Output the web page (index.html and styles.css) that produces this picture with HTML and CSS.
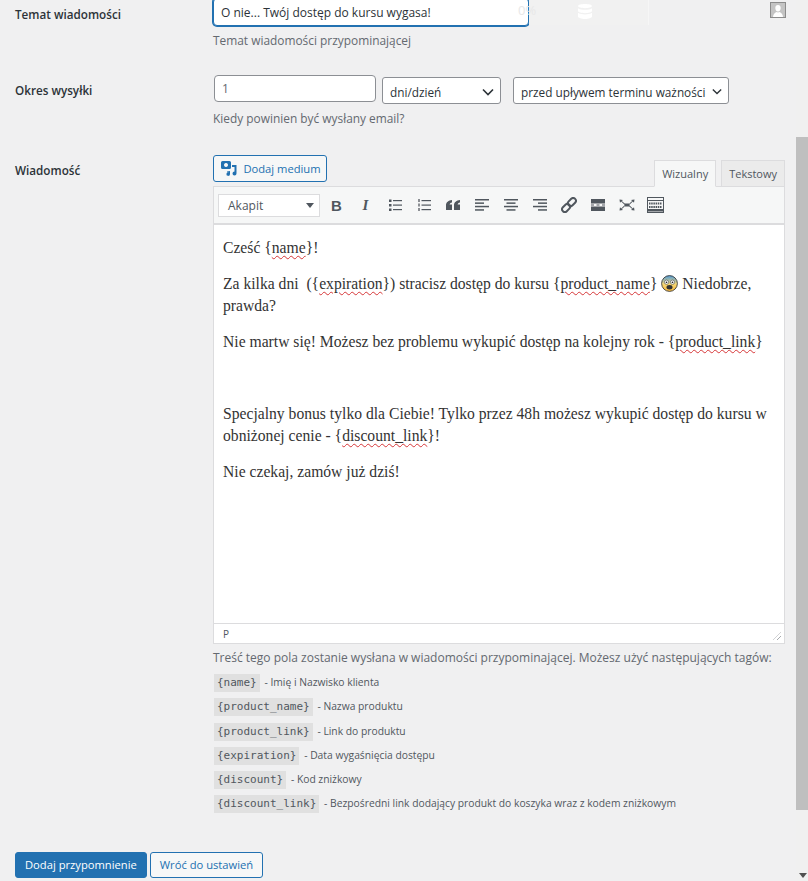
FILE: index.html
```html
<!DOCTYPE html>
<html lang="pl">

<head>
    <meta charset="UTF-8">
    <meta name="viewport" content="width=device-width, initial-scale=1.0">
    <title>Dodaj przypomnienie</title>
    <link rel="stylesheet" href="styles.css">
</head>

<body>
<div class="ghost-bar">
    <span class="ghost-pct">0%</span>
    <svg class="ghost-db" width="14" height="15" viewBox="0 0 12 18" preserveAspectRatio="none"><path d="M0 2.500C0 1 3 0 6 0s6 1 6 2.500S9 5 6 5 0 4 0 2.500zM0 5c1 1.500 4 2 6 2s5-.5 6-2v3.500C12 10 9 11 6 11S0 10 0 8.500zM0 10.500c1 1.500 4 2 6 2s5-.5 6-2V15c0 1.500-3 3-6 3s-6-1.500-6-3z" fill="#fff"/></svg>
    <svg class="ghost-user" width="16" height="16" viewBox="0 0 16 16"><rect x=".5" y=".5" width="15" height="15" fill="#c4c4c4" stroke="#8c8c8c"/><path d="M8 3c1.700 0 2.700 1.300 2.700 3S9.700 9.500 8 9.500 5.300 7.700 5.300 6 6.300 3 8 3zM3 15c0-3 2.500-4.500 3.500-5 .9.600 2.100.600 3 0 1 .5 3.500 2 3.500 5z" fill="#fff"/></svg>
</div>

<div class="scrollbar">
    <div class="scroll-thumb"></div>
    <div class="scroll-arrow"></div>
</div>

<form class="form">
    <div class="row row-subject">
        <label class="label">Temat wiadomości</label>
        <div class="field">
            <input class="ipt ipt-subject" type="text" value="O nie... Twój dostęp do kursu wygasa!">
            <p class="desc">Temat wiadomości przypominającej</p>
        </div>
    </div>

    <div class="row row-period">
        <label class="label">Okres wysyłki</label>
        <div class="field">
            <div class="period">
                <input class="ipt ipt-num" type="text" value="1">
                <div class="sel sel-unit">dni/dzień<svg class="chev" width="12" height="8" viewBox="0 0 12 8"><path d="M1 1.500l5 5 5-5" fill="none" stroke="#2c3338" stroke-width="1.600"/></svg></div>
                <div class="sel sel-when">przed upływem terminu ważności<svg class="chev" width="10" height="7" viewBox="0 0 12 8"><path d="M1 1.500l5 5 5-5" fill="none" stroke="#2c3338" stroke-width="1.600"/></svg></div>
            </div>
            <p class="desc">Kiedy powinien być wysłany email?</p>
        </div>
    </div>

    <div class="row row-message">
        <label class="label">Wiadomość</label>
        <div class="field">
            <div class="ed-top">
                <button class="btn btn-media" type="button">
                    <svg class="media-icon" width="16" height="15" viewBox="0 0 16 15"><path d="M1.500 0h7A1.500 1.500 0 0 1 10 1.500v5A1.500 1.500 0 0 1 8.500 8h-7A1.500 1.500 0 0 1 0 6.500v-5A1.500 1.500 0 0 1 1.500 0z M5 2a2 2 0 1 0 .01 0z" fill="#2271b1" fill-rule="evenodd"/><path d="M11 4h4.500v8.500a2 2 0 1 1-2-2V6H11z M6 10.500l3-.5v3a1.800 1.800 0 1 1-1.500-1.700V11l-1.500.2z" fill="#2271b1"/></svg>
                    Dodaj medium
                </button>
                <div class="tabs">
                    <span class="tab tab-on">Wizualny</span>
                    <span class="tab">Tekstowy</span>
                </div>
            </div>

            <div class="editor">
                <div class="toolbar">
                    <div class="format">Akapit<span class="format-arrow"></span></div>
                    <div class="tools">
                        <span class="tool tool-b">B</span>
                        <span class="tool tool-i">I</span>
                        <span class="tool"><svg width="14" height="14" viewBox="0 0 14 14" fill="#50575e"><rect x="1" y="1.500" width="2.500" height="2.500"/><rect x="1" y="6" width="2.500" height="2.500"/><rect x="1" y="10.500" width="2.500" height="2.500"/><rect x="5" y="2" width="9" height="1.200"/><rect x="5" y="6.500" width="9" height="1.200"/><rect x="5" y="11" width="9" height="1.200"/></svg></span>
                        <span class="tool"><svg width="14" height="14" viewBox="0 0 14 14" fill="#50575e"><rect x="1" y="1" width="2" height="3" fill="#8c8f94"/><rect x="1" y="5.500" width="2" height="3" fill="#8c8f94"/><rect x="1" y="10" width="2" height="3" fill="#8c8f94"/><rect x="4.500" y="2" width="9.500" height="1.200"/><rect x="4.500" y="6.500" width="9.500" height="1.200"/><rect x="4.500" y="11" width="9.500" height="1.200"/></svg></span>
                        <span class="tool"><svg width="14" height="12" viewBox="0 0 14 12" fill="#50575e"><path d="M6 1v2.500C4.500 3.800 3.700 4.700 3.600 5.500H6V11H0V6C0 3.500 2.500 1.200 6 1zM14 1v2.500c-1.500.3-2.300 1.200-2.400 2H14V11H8V6c0-2.500 2.500-4.800 6-5z"/></svg></span>
                        <span class="tool"><svg width="14" height="12" viewBox="0 0 14 12" fill="#50575e"><rect width="14" height="1.500"/><rect y="3.400" width="9" height="1.500"/><rect y="6.800" width="14" height="1.500"/><rect y="10.200" width="9" height="1.500"/></svg></span>
                        <span class="tool"><svg width="14" height="12" viewBox="0 0 14 12" fill="#50575e"><rect width="14" height="1.500"/><rect x="2.500" y="3.400" width="9" height="1.500"/><rect y="6.800" width="14" height="1.500"/><rect x="2.500" y="10.200" width="9" height="1.500"/></svg></span>
                        <span class="tool"><svg width="14" height="12" viewBox="0 0 14 12" fill="#50575e"><rect width="14" height="1.500"/><rect x="5" y="3.400" width="9" height="1.500"/><rect y="6.800" width="14" height="1.500"/><rect x="5" y="10.200" width="9" height="1.500"/></svg></span>
                        <span class="tool"><svg width="16" height="16" viewBox="0 0 16 16" fill="none" stroke="#50575e" stroke-width="2"><rect x="8.200" y="0.600" width="5.500" height="9" rx="2.700" transform="rotate(45 11 5)"/><rect x="2.300" y="6.400" width="5.500" height="9" rx="2.700" transform="rotate(45 5 11)"/></svg></span>
                        <span class="tool"><svg width="14" height="12" viewBox="0 0 14 12" fill="#50575e"><rect width="14" height="4.500"/><rect y="7.500" width="14" height="4.500"/><rect y="5.500" width="3" height="1"/><rect x="5.500" y="5.500" width="3" height="1"/><rect x="11" y="5.500" width="3" height="1"/></svg></span>
                        <span class="tool"><svg width="16" height="14" viewBox="0 0 16 14" fill="#50575e"><path d="M5.500 5.500h5v3h-5zM0.500 1.500L4 2 2.800 3 6 5.800 5.300 6.500 2.200 3.600 1 4.800zM15.500 1.500L12 2l1.200 1L10 5.800l.7.700 3.100-2.900L15 4.800zM.5 12.500L4 12l-1.200-1L6 8.200 5.300 7.500 2.200 10.400 1 9.200zM15.500 12.500L12 12l1.200-1L10 8.200l.7-.7 3.100 2.900L15 9.200z"/></svg></span>
                        <span class="tool"><svg width="17" height="16" viewBox="0 0 17 16"><rect x=".5" y=".5" width="16" height="15" fill="#f6f7f7" stroke="#50575e"/><rect x="1" y="3" width="15" height="1" fill="#50575e"/><path d="M2 6.500h13M2 10h13" stroke="#50575e" stroke-width="2" stroke-dasharray="1.500 .7"/><rect x="1" y="12" width="15" height="2.500" fill="#50575e"/></svg></span>
                    </div>
                </div>
                <div class="content">
                    <p>Cześć {<span class="spell">name</span>}!</p>
                    <p>Za kilka dni &nbsp;({<span class="spell">expiration</span>}) stracisz dostęp do kursu {<span class="spell">product_name</span>} <svg class="emoji" width="17" height="17" viewBox="0 0 20 20"><defs><linearGradient id="fear" x1="0" y1="0" x2="0" y2="1"><stop offset="0" stop-color="#4f9bd9"/><stop offset=".55" stop-color="#f7d774"/><stop offset="1" stop-color="#f4b63c"/></linearGradient></defs><circle cx="10" cy="10" r="9.300" fill="url(#fear)" stroke="#333" stroke-width="1"/><circle cx="6.500" cy="8.500" r="2.500" fill="#fff" stroke="#333" stroke-width=".6"/><circle cx="13.500" cy="8.500" r="2.500" fill="#fff" stroke="#333" stroke-width=".6"/><circle cx="6.500" cy="8.500" r="1" fill="#222"/><circle cx="13.500" cy="8.500" r="1" fill="#222"/><ellipse cx="10" cy="14.500" rx="3.500" ry="2.600" fill="#333"/></svg> Niedobrze, prawda?</p>
                    <p>Nie martw się! Możesz bez problemu wykupić dostęp na kolejny rok - {<span class="spell">product_link</span>}</p>
                    <p>&nbsp;</p>
                    <p>Specjalny bonus tylko dla Ciebie! Tylko przez 48h możesz wykupić dostęp do kursu w obniżonej cenie - {<span class="spell">discount_link</span>}!</p>
                    <p>Nie czekaj, zamów już dziś!</p>
                </div>
                <div class="status">P<span class="resize"></span></div>
            </div>

            <p class="desc desc-tags">Treść tego pola zostanie wysłana w wiadomości przypominającej. Możesz użyć następujących tagów:</p>
            <ul class="tags">
                <li><code>{name}</code> - Imię i Nazwisko klienta</li>
                <li><code>{product_name}</code> - Nazwa produktu</li>
                <li><code>{product_link}</code> - Link do produktu</li>
                <li><code>{expiration}</code> - Data wygaśnięcia dostępu</li>
                <li><code>{discount}</code> - Kod zniżkowy</li>
                <li><code>{discount_link}</code> - Bezpośredni link dodający produkt do koszyka wraz z kodem zniżkowym</li>
            </ul>
        </div>
    </div>

    <div class="actions">
        <button class="btn btn-primary" type="button">Dodaj przypomnienie</button>
        <button class="btn" type="button">Wróć do ustawień</button>
    </div>
</form>
</body>

</html>
```

FILE: styles.css
```css
html,
body {
    margin: 0;
    height: 881px;
    overflow: hidden;
    background: #f0f0f1;
}

body {
    position: relative;
    font-family: "Open Sans", "Noto Sans", sans-serif;
    font-size: 12px;
    color: #3c434a;
}

.form {
    margin-top: -2px;
    padding-left: 15px;
    width: 770px;
}

.row {
    display: grid;
    grid-template-columns: 198px 1fr;
}

.label {
    font-weight: 600;
    font-size: 11.700px;
    color: #2c3338;
    line-height: 16px;
}

.row-subject .label {
    padding-top: 8px;
}

.row-period {
    margin-top: 26px;
}

.row-period .label {
    padding-top: 7px;
}

.row-message {
    margin-top: 28px;
}

.row-message .label {
    padding-top: 7px;
}

.desc {
    margin: 5px 0 0;
    font-size: 11.900px;
    line-height: 18px;
    color: #646970;
}

.ipt {
    box-sizing: border-box;
    display: block;
    border: 1px solid #8c8f94;
    border-radius: 4px;
    background: #fff;
    font: 12px "Open Sans", sans-serif;
    color: #2c3338;
    padding: 0 7px;
}

.ipt-subject {
    width: 316px;
    height: 28px;
    border-color: #2271b1;
    box-shadow: 0 0 0 1px #2271b1;
    outline: none;
}

.period {
    display: flex;
    align-items: flex-start;
    gap: 6px;
}

.ipt-num {
    margin-left: 1px;
    width: 162px;
    height: 27px;
    color: #646970;
}

.sel {
    box-sizing: border-box;
    display: flex;
    align-items: center;
    justify-content: space-between;
    margin-top: 2px;
    height: 27px;
    padding: 2px 6px 0 7px;
    border: 1px solid #8c8f94;
    border-radius: 3px;
    background: #fff;
    font-size: 11.800px;
    color: #2c3338;
    white-space: nowrap;
}

.sel-unit {
    width: 119px;
}

.sel-when {
    margin-left: 6px;
    width: 216px;
}

.row-period .desc {
    margin-top: 5px;
}

.ed-top {
    display: flex;
    align-items: flex-end;
    justify-content: space-between;
    width: 572px;
}

.btn {
    box-sizing: border-box;
    height: 27px;
    padding: 0 10px;
    border: 1px solid #2271b1;
    border-radius: 3px;
    background: #f6f7f7;
    color: #2271b1;
    font: 11.200px "Open Sans", sans-serif;
    display: inline-flex;
    align-items: center;
    justify-content: center;
    gap: 6px;
}

.btn-media {
    margin-bottom: 4px;
    padding: 0 6px 0 8px;
    width: 114px;
    white-space: nowrap;
}

.media-icon {
    flex-shrink: 0;
}

.btn-primary {
    background: #2271b1;
    color: #fff;
}

.tabs {
    display: flex;
    gap: 5px;
    margin-bottom: -1px;
    position: relative;
}

.tab {
    box-sizing: border-box;
    height: 27px;
    padding: 0 7px;
    display: flex;
    align-items: center;
    border: 1px solid #dcdcde;
    background: #ebebeb;
    font-size: 11px;
    color: #50575e;
}

.tab-on {
    background: #f6f7f7;
    border-bottom-color: #f6f7f7;
}

.editor {
    box-sizing: border-box;
    width: 572px;
    border: 1px solid #dcdcde;
    background: #fff;
}

.toolbar {
    display: flex;
    align-items: center;
    height: 36px;
    padding-left: 4px;
    background: #f6f7f7;
    border-bottom: 2px solid #dcdcde;
}

.format {
    box-sizing: border-box;
    position: relative;
    width: 102px;
    height: 23px;
    line-height: 21px;
    padding-left: 9px;
    border: 1px solid #dcdcde;
    background: #fff;
    color: #50575e;
}

.format-arrow {
    position: absolute;
    right: 5px;
    top: 8px;
    border: 4px solid transparent;
    border-top: 5px solid #50575e;
    border-bottom: 0;
}

.tools {
    display: flex;
    margin-left: 2px;
}

.tool {
    width: 29px;
    height: 20px;
    display: flex;
    align-items: center;
    justify-content: center;
}

.tool-b {
    font: bold 15px "Liberation Sans", sans-serif;
    color: #50575e;
}

.tool-i {
    font: italic bold 15px "Liberation Serif", serif;
    color: #50575e;
}

.content {
    box-sizing: border-box;
    height: 398px;
    padding: 12px 9px 0;
    font-family: "Liberation Serif", serif;
    font-size: 15.650px;
    line-height: 22px;
    color: #333;
}

.content p {
    margin: 0 0 14px;
}

.spell {
    text-decoration: underline wavy #d63638 1px;
    text-underline-offset: 2px;
}

.emoji {
    vertical-align: -3px;
}

.status {
    position: relative;
    height: 19px;
    line-height: 20px;
    padding-left: 9px;
    border-top: 1px solid #dcdcde;
    font-size: 10px;
    color: #50575e;
}

.resize {
    position: absolute;
    right: 3px;
    bottom: 3px;
    width: 8px;
    height: 8px;
    background: repeating-linear-gradient(135deg, transparent 0 2px, #a7aaad 2px 3px);
    clip-path: polygon(100% 0, 100% 100%, 0 100%);
}

.desc-tags {
    margin-top: 5px;
    font-size: 12px;
}

.tags {
    margin: 4px 0 0;
    padding: 0;
    list-style: none;
    font-size: 10.300px;
    color: #50575e;
}

.tags li {
    height: 24.300px;
    line-height: 22px;
}

code {
    display: inline-block;
    height: 18px;
    line-height: 18px;
    padding: 0 3px;
    margin: 0 2px 0 1px;
    background: #e0e0e0;
    font-family: "DejaVu Sans Mono", monospace;
    font-size: 11px;
    color: #50575e;
}

.actions {
    display: flex;
    gap: 3px;
    margin-top: 35px;
}

.actions .btn {
    height: 26px;
    padding: 0 9px;
    white-space: nowrap;
}

.ghost-bar {
    position: absolute;
    left: 529px;
    top: 0;
    width: 119px;
    height: 25px;
    border-right: 1px solid #f6f6f6;
    background: #f1f1f1;
}

.ghost-pct {
    position: absolute;
    left: -11px;
    top: 1px;
    color: #e8e8e8;
    font-size: 13px;
}

.ghost-db {
    position: absolute;
    left: 49px;
    top: 4px;
}

.ghost-user {
    position: absolute;
    left: 241px;
    top: 2px;
}

.scrollbar {
    position: absolute;
    right: 0;
    top: 0;
    width: 12px;
    height: 881px;
    background: #f0f0f0;
}

.scroll-thumb {
    position: absolute;
    top: 137px;
    width: 12px;
    height: 673px;
    background: #bfbfbf;
}

.scroll-arrow {
    position: absolute;
    left: 3px;
    top: 873px;
    width: 0;
    height: 0;
    border: 4px solid transparent;
    border-top: 5px solid #505050;
    border-bottom: 0;
}
```
